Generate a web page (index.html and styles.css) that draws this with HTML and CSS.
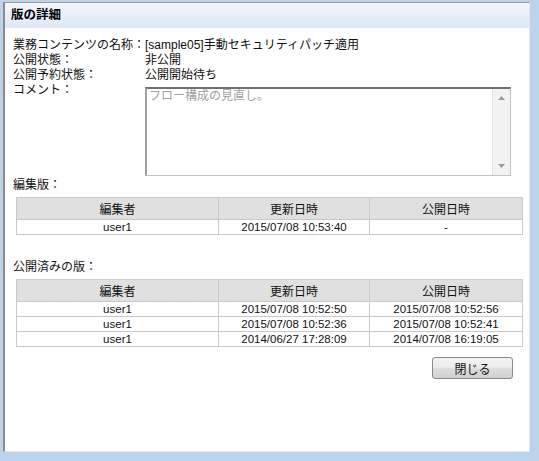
FILE: index.html
```html
<!DOCTYPE html>
<html lang="ja">
<head>
<meta charset="utf-8">
<link rel="stylesheet" href="styles.css">
</head>
<body>
<div class="window">
  <div class="title-bar">版の詳細</div>
  <div class="content">
    <div class="info">
      <div class="label">業務コンテンツの名称：</div><div class="value">[sample05]手動セキュリティパッチ適用</div>
      <div class="label">公開状態：</div><div class="value">非公開</div>
      <div class="label">公開予約状態：</div><div class="value">公開開始待ち</div>
      <div class="label">コメント：</div>
      <div class="value">
        <div class="textarea">
          <div class="ta-text">フロー構成の見直し。</div>
          <div class="scrollbar">
            <svg class="arrow" width="7" height="4" viewBox="0 0 7 4"><path d="M0 4 L3.5 0 L7 4 Z" fill="#9a9a9a"/></svg>
            <svg class="arrow" width="7" height="4" viewBox="0 0 7 4"><path d="M0 0 L3.5 4 L7 0 Z" fill="#9a9a9a"/></svg>
          </div>
        </div>
      </div>
    </div>

    <div class="section-title">編集版：</div>
    <table class="grid">
      <colgroup><col class="c1"><col class="c2"><col class="c3"></colgroup>
      <thead><tr><th>編集者</th><th>更新日時</th><th>公開日時</th></tr></thead>
      <tbody><tr><td>user1</td><td>2015/07/08 10:53:40</td><td>-</td></tr></tbody>
    </table>

    <div class="section-title second">公開済みの版：</div>
    <table class="grid">
      <colgroup><col class="c1"><col class="c2"><col class="c3"></colgroup>
      <thead><tr><th>編集者</th><th>更新日時</th><th>公開日時</th></tr></thead>
      <tbody>
        <tr><td>user1</td><td>2015/07/08 10:52:50</td><td>2015/07/08 10:52:56</td></tr>
        <tr><td>user1</td><td>2015/07/08 10:52:36</td><td>2015/07/08 10:52:41</td></tr>
        <tr><td>user1</td><td>2014/06/27 17:28:09</td><td>2014/07/08 16:19:05</td></tr>
      </tbody>
    </table>

    <div class="actions"><button class="btn">閉じる</button></div>
  </div>
</div>
</body>
</html>
```
FILE: styles.css
```css
html, body {
  margin: 0;
  padding: 0;
}
body {
  background: #bcd3ec;
  width: 539px;
  height: 461px;
  overflow: hidden;
  font-family: "Liberation Sans", "Noto Sans CJK JP", sans-serif;
  font-size: 12px;
  color: #111;
}
.window {
  margin: 2px 9px 0 3px;
  height: 448px;
  background: #fff;
  border-top: 1px solid #9a9a9a;
  border-left: 2px solid #8c8c8c;
  border-right: 1px solid #e6e6e6;
  border-bottom: 1px solid #e6e6e6;
  display: flex;
  flex-direction: column;
}
.title-bar {
  height: 25px;
  line-height: 25px;
  padding-left: 6px;
  font-weight: bold;
  font-size: 12.5px;
  color: #000;
  background: linear-gradient(#f4f7fc, #dde7f5);
}
.content {
  padding: 10px 8px 0 8px;
}
.info {
  display: grid;
  grid-template-columns: 132px 366px;
  line-height: 15px;
}
.label, .value {
  height: 15px;
  white-space: nowrap;
}
.info .value:last-child {
  height: auto;
}
.textarea {
  margin-top: 4px;
  height: 86px;
  border: 1px solid #c4c4c4;
  border-top: 2px solid #6e6e6e;
  border-left: 2px solid #a0a0a0;
  display: flex;
  background: #fff;
}
.ta-text {
  flex: 1;
  color: #a0a0a0;
  padding: 0 2px;
  line-height: 15px;
}
.scrollbar {
  width: 17px;
  background: #f2f2f2;
  border-left: 1px solid #e4e4e4;
  display: flex;
  flex-direction: column;
  justify-content: space-between;
  align-items: center;
  padding: 7px 0 7px;
}
.section-title {
  margin-top: 2px;
  line-height: 15px;
  height: 15px;
}
.section-title.second {
  margin-top: 25px;
}
.grid {
  margin: 4px 0 0 3px;
  width: 506px;
  border-collapse: collapse;
  table-layout: fixed;
  color: #111;
  font-size: 11.5px;
}
.grid col.c1 { width: 202px; }
.grid col.c2 { width: 151px; }
.grid col.c3 { width: 153px; }
.grid th, .grid td {
  border: 1px solid #c9c9c9;
  text-align: center;
  padding: 0;
  font-weight: normal;
  white-space: nowrap;
}
.grid th {
  height: 21px;
  font-size: 12px;
  background-color: #e1e1e1;
  background-image: radial-gradient(#d8d8d8 0.6px, transparent 0.8px);
  background-size: 3px 3px;
}
.grid td {
  height: 14px;
  line-height: 14px;
  background: #fff;
}
.actions {
  display: flex;
  justify-content: flex-end;
  padding-right: 8px;
  margin-top: 10px;
}
.btn {
  width: 81px;
  height: 22px;
  padding: 0;
  font-family: inherit;
  font-size: 12px;
  color: #111;
  border: 1px solid #8a8a8a;
  border-radius: 3px;
  background: linear-gradient(#f3f3f3 0%, #ebebeb 45%, #dcdcdc 55%, #d0d0d0 100%);
}
```
